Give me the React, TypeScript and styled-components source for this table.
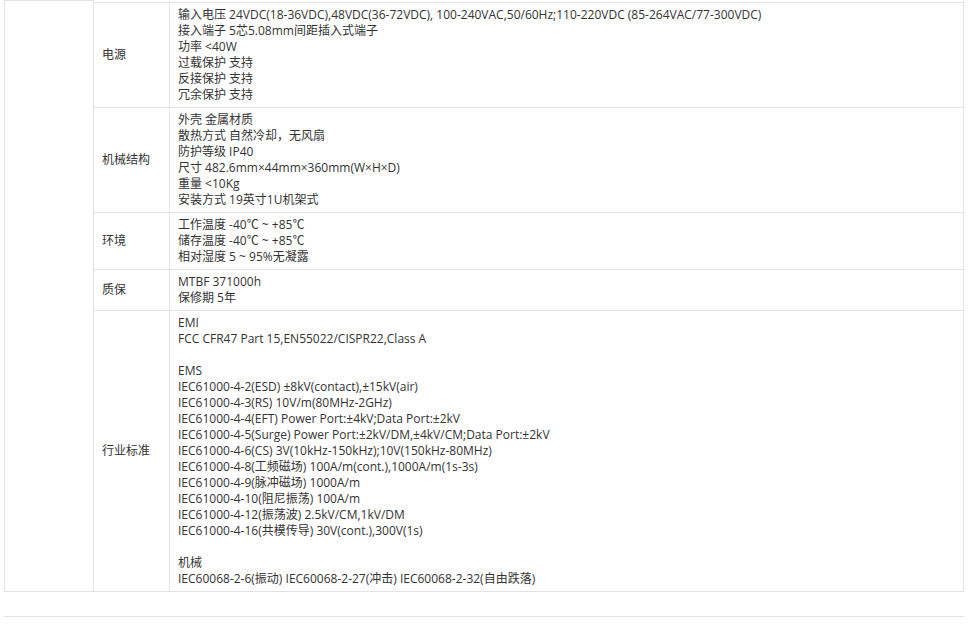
import React from 'react';
import styled, { createGlobalStyle } from 'styled-components';

const GlobalStyle = createGlobalStyle`
    html, body {
        margin: 0;
        padding: 0;
        background: #ffffff;
    }
    body {
        font-family: "Open Sans", "Noto Sans CJK SC", sans-serif;
        font-size: 12px;
        color: #333333;
    }
`;

const Page = styled.div`
    width: 960px;
    padding-left: 4px;
`;

const SpecTable = styled.table`
    width: 960px;
    border-collapse: collapse;
    table-layout: fixed;
`;

const Col = styled.col<{ $width?: number }>`
    width: ${(p) => (p.$width ? `${p.$width}px` : 'auto')};
`;

const Cell = styled.td`
    border: 1px solid #e3e3e3;
    padding: 4px 8px;
    line-height: 16px;
    vertical-align: middle;
    white-space: nowrap;
`;

const SpacerCell = styled.td`
    border: 1px solid #e3e3e3;
    border-top: none;
    height: 1px;
    padding: 0;
`;

const Line = styled.div`
    min-height: 16px;
`;

const Divider = styled.div`
    margin-top: 24px;
    border-top: 1px solid #e3e3e3;
    width: 960px;
`;

interface SpecRow {
    label: string;
    lines: string[];
}

const rows: SpecRow[] = [
    {
        label: '电源',
        lines: [
            '输入电压 24VDC(18-36VDC),48VDC(36-72VDC), 100-240VAC,50/60Hz;110-220VDC (85-264VAC/77-300VDC)',
            '接入端子 5芯5.08mm间距插入式端子',
            '功率 <40W',
            '过载保护 支持',
            '反接保护 支持',
            '冗余保护 支持',
        ],
    },
    {
        label: '机械结构',
        lines: [
            '外壳 金属材质',
            '散热方式 自然冷却，无风扇',
            '防护等级 IP40',
            '尺寸 482.6mm×44mm×360mm(W×H×D)',
            '重量 <10Kg',
            '安装方式 19英寸1U机架式',
        ],
    },
    {
        label: '环境',
        lines: ['工作温度 -40℃ ~ +85℃', '储存温度 -40℃ ~ +85℃', '相对湿度 5 ~ 95%无凝露'],
    },
    {
        label: '质保',
        lines: ['MTBF 371000h', '保修期 5年'],
    },
    {
        label: '行业标准',
        lines: [
            'EMI',
            'FCC CFR47 Part 15,EN55022/CISPR22,Class A',
            '',
            'EMS',
            'IEC61000-4-2(ESD) ±8kV(contact),±15kV(air)',
            'IEC61000-4-3(RS) 10V/m(80MHz-2GHz)',
            'IEC61000-4-4(EFT) Power Port:±4kV;Data Port:±2kV',
            'IEC61000-4-5(Surge) Power Port:±2kV/DM,±4kV/CM;Data Port:±2kV',
            'IEC61000-4-6(CS) 3V(10kHz-150kHz);10V(150kHz-80MHz)',
            'IEC61000-4-8(工频磁场) 100A/m(cont.),1000A/m(1s-3s)',
            'IEC61000-4-9(脉冲磁场) 1000A/m',
            'IEC61000-4-10(阻尼振荡) 100A/m',
            'IEC61000-4-12(振荡波) 2.5kV/CM,1kV/DM',
            'IEC61000-4-16(共模传导) 30V(cont.),300V(1s)',
            '',
            '机械',
            'IEC60068-2-6(振动) IEC60068-2-27(冲击) IEC60068-2-32(自由跌落)',
        ],
    },
];

const App: React.FC = () => {
    return (
        <Page>
            <GlobalStyle />
            <SpecTable>
                <colgroup>
                    <Col $width={89} />
                    <Col $width={76} />
                    <Col />
                </colgroup>
                <tbody>
                    <tr>
                        <Cell rowSpan={rows.length + 1} />
                        <SpacerCell />
                        <SpacerCell />
                    </tr>
                    {rows.map((row) => (
                        <tr key={row.label}>
                            <Cell>{row.label}</Cell>
                            <Cell>
                                {row.lines.map((line, i) => (
                                    <Line key={i}>{line || '\u00a0'}</Line>
                                ))}
                            </Cell>
                        </tr>
                    ))}
                </tbody>
            </SpecTable>
            <Divider />
        </Page>
    );
};

export default App;
